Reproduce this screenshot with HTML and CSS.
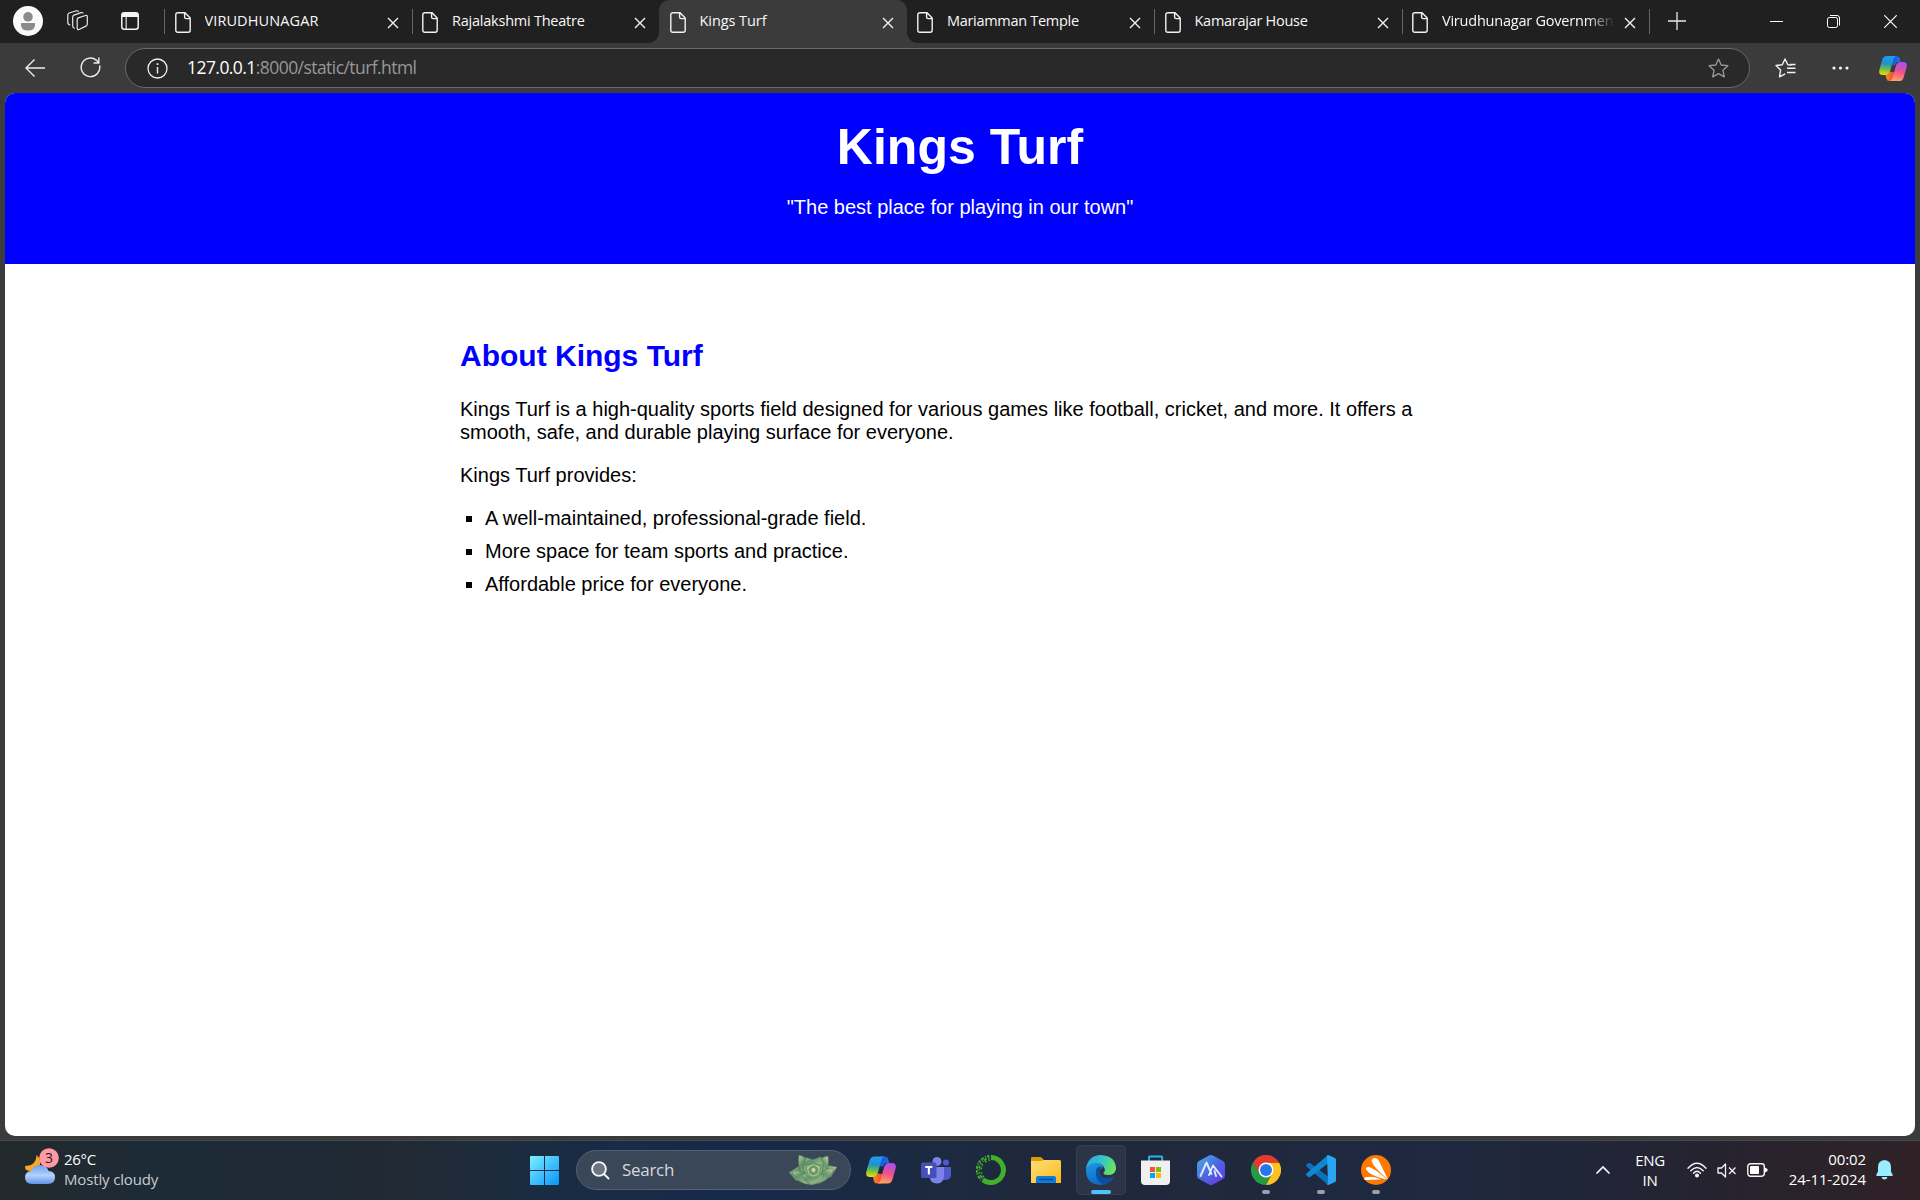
FILE: index.html
```html
<!DOCTYPE html>
<html lang="en">
<head>
<meta charset="utf-8">
<title>Kings Turf</title>
<link rel="stylesheet" href="styles.css">
</head>
<body>
<svg class="defs" width="0" height="0" aria-hidden="true">
  <defs>
    <linearGradient id="cpA" x1="0.5" y1="0" x2="0.4" y2="1"><stop offset="0" stop-color="#1aa0f0"/><stop offset=".4" stop-color="#2390c9"/><stop offset=".7" stop-color="#6cc04a"/><stop offset="1" stop-color="#f7d808"/></linearGradient>
    <linearGradient id="cpB" x1="0.6" y1="0" x2="0.4" y2="1"><stop offset="0" stop-color="#a94ff2"/><stop offset=".5" stop-color="#f0508c"/><stop offset="1" stop-color="#ffa35c"/></linearGradient>
    <linearGradient id="cpC" x1="0" y1="0" x2="1" y2="0.5"><stop offset="0" stop-color="#1b4fd8"/><stop offset="1" stop-color="#1e70e8"/></linearGradient>
    <linearGradient id="cpD" x1="0" y1="0" x2="1" y2="0"><stop offset="0" stop-color="#ff8a2a"/><stop offset="1" stop-color="#e8452c"/></linearGradient>
    <linearGradient id="win" x1="0" y1="0" x2="1" y2="1"><stop offset="0" stop-color="#7df0ff"/><stop offset="1" stop-color="#0894fb"/></linearGradient>
    <linearGradient id="cloud" x1="0" y1="0" x2="0" y2="1"><stop offset="0" stop-color="#6f9ff0"/><stop offset=".55" stop-color="#b3d1fb"/><stop offset="1" stop-color="#6292ea"/></linearGradient>
    <linearGradient id="fold" x1="0" y1="0" x2="1" y2="1"><stop offset="0" stop-color="#ffe07a"/><stop offset="1" stop-color="#fbb81b"/></linearGradient>
    <linearGradient id="edgeTop" x1="0" y1="0.3" x2="1" y2="0.6"><stop offset="0" stop-color="#2aa7e8"/><stop offset=".5" stop-color="#35c6c8"/><stop offset="1" stop-color="#6fe556"/></linearGradient>
    <linearGradient id="edgeLeft" x1="0" y1="0" x2="0.6" y2="1"><stop offset="0" stop-color="#1c9be6"/><stop offset="1" stop-color="#0f62c0"/></linearGradient>
    <linearGradient id="hex" x1="0" y1="0" x2="1" y2="1"><stop offset="0" stop-color="#4fb0e8"/><stop offset=".5" stop-color="#4a68e0"/><stop offset="1" stop-color="#6a30e8"/></linearGradient>
    <linearGradient id="leaf" x1="0" y1="0" x2="1" y2="1"><stop offset="0" stop-color="#cdd69a"/><stop offset=".35" stop-color="#5f9470"/><stop offset="1" stop-color="#b9cc90"/></linearGradient>
    <linearGradient id="leaf2" x1="1" y1="0" x2="0" y2="1"><stop offset="0" stop-color="#d4dba0"/><stop offset=".35" stop-color="#669a72"/><stop offset="1" stop-color="#bccf92"/></linearGradient>
    <symbol id="page" viewBox="0 0 16 21"><path d="M3 .8H10L15.2 6V18.2Q15.2 20.2 13.2 20.2H2.8Q.8 20.2 .8 18.2V2.8Q.8 .8 3 .8M9.6 1V5Q9.6 6.6 11.2 6.6H15" fill="none" stroke="#f2f2f2" stroke-width="1.4"/></symbol>
    <symbol id="x" viewBox="0 0 12 12"><path d="M1 1L11 11M11 1L1 11" stroke="#f2f2f2" stroke-width="1.4" fill="none"/></symbol>
    <symbol id="copilot" viewBox="0 0 30 28">
      <path d="M14 .5H19Q21.500 .5 22.200 3L23.200 7H20.500Q18.300 7 17.400 9.500L17 10.500L13 10Z" fill="url(#cpC)"/>
      <path d="M16 27.500H11Q8.500 27.500 8 25L7 21Q10.500 20.500 11.800 17.500L17 18Z" fill="url(#cpD)"/>
      <path d="M8.500 .5H18Q16.300 1.200 15.500 4L11.800 17Q10.600 21 6.800 21H4Q-.8 21 .4 15.500L3.400 5Q4.600 .5 8.500 .5Z" fill="url(#cpA)"/>
      <path d="M21.500 27.500H12Q13.700 26.800 14.500 24L18.200 11Q19.400 7 23.200 7H26Q30.800 7 29.600 12.500L26.600 23Q25.400 27.500 21.500 27.500Z" fill="url(#cpB)"/>
    </symbol>
  </defs>
</svg>

<div class="tabstrip">
  <div class="strip-tools">
    <svg width="30" height="30" viewBox="0 0 30 30"><circle cx="15" cy="15" r="15" fill="#fafafa"/><circle cx="15" cy="10.800" r="4.800" fill="#8b8b8b"/><path d="M8 17H22V19Q22 24.500 15 24.500T8 19Z" fill="#8b8b8b"/></svg>
    <svg class="spaces" width="21" height="21" viewBox="0 0 21 21" fill="none" stroke="#e8e8e8" stroke-width="1.200" stroke-linejoin="round"><path d="M10.200 9.500Q10.200 8.300 11.300 7.900L18.500 5.500Q20.300 5 20.300 6.800V14Q20.300 15.500 18.900 16.100L12 19.500Q10.200 20.200 10.200 18.300Z"/><path d="M7.800 18.300Q5.700 18 5.700 16V7Q5.700 5.600 7 5.100L14 2.600Q15.600 2.200 16.200 3.600"/><path d="M3.300 15Q.8 14.600 .8 12.500V4.800Q.8 3.500 2.200 3L9.500 .8Q11 .5 11.600 1.700"/></svg>
    <svg class="vtabs" width="18" height="18" viewBox="0 0 18 18"><rect x=".8" y=".8" width="16.400" height="16.400" rx="2.500" fill="none" stroke="#f4f4f4" stroke-width="1.500"/><path d="M1 3Q1 1 3 1H15Q17 1 17 3V5H1ZM4.600 5H5.700V17H4.600Z" fill="#f4f4f4"/></svg>
  </div>
  <div class="tab"><svg class="page"><use href="#page"/></svg><span class="title t1">VIRUDHUNAGAR</span><svg class="x"><use href="#x"/></svg></div>
  <div class="tab"><svg class="page"><use href="#page"/></svg><span class="title t2">Rajalakshmi Theatre</span><svg class="x"><use href="#x"/></svg></div>
  <div class="tab active"><svg class="page"><use href="#page"/></svg><span class="title t3">Kings Turf</span><svg class="x"><use href="#x"/></svg></div>
  <div class="tab plain"><svg class="page"><use href="#page"/></svg><span class="title t4">Mariamman Temple</span><svg class="x"><use href="#x"/></svg></div>
  <div class="tab"><svg class="page"><use href="#page"/></svg><span class="title t5">Kamarajar House</span><svg class="x"><use href="#x"/></svg></div>
  <div class="tab last"><svg class="page"><use href="#page"/></svg><span class="title t6">Virudhunagar Government</span><svg class="x"><use href="#x"/></svg></div>
  <svg class="plus" width="18" height="18" viewBox="0 0 18 18"><path d="M9 0V18M0 9H18" stroke="#e8e8e8" stroke-width="1.300"/></svg>
  <div class="window-buttons">
    <svg width="13" height="13" viewBox="0 0 13 13"><path d="M0 6.500H13" stroke="#fff"/></svg>
    <svg width="13" height="13" viewBox="0 0 13 13" fill="none" stroke="#fff"><rect x=".5" y="2.500" width="10" height="10" rx="1.800"/><path d="M3 .5H10Q12.500 .5 12.500 3V10.500"/></svg>
    <svg width="13" height="13" viewBox="0 0 13 13"><path d="M.3 .3L12.700 12.700M12.700 .3L.3 12.700" stroke="#fff" stroke-width="1.200"/></svg>
  </div>
</div>

<div class="toolbar">
  <svg class="back" width="20" height="18" viewBox="0 0 20 18" fill="none" stroke="#ededed" stroke-width="1.400"><path d="M9.500 .6L1 9L9.500 17.400M1 9H20"/></svg>
  <svg class="reload" width="21" height="21" viewBox="0 0 21 21" fill="none" stroke="#ededed" stroke-width="1.400"><path d="M19.600 8.500A9.300 9.300 0 1 1 16.300 3.100L18.500 5.600M18.800 .5V6H13.500"/></svg>
  <div class="address">
    <svg width="21" height="21" viewBox="0 0 21 21"><circle cx="10.500" cy="10.500" r="9.500" fill="none" stroke="#f0f0f0" stroke-width="1.300"/><path d="M9.800 9H11.200V15.500H9.800ZM9.600 5.300H11.400V7.100H9.600Z" fill="#f0f0f0"/></svg>
    <span class="url"><b>127.0.0.1</b>:8000/static/turf.html</span>
    <svg class="star" width="21" height="20" viewBox="0 0 21 20"><path d="M10.500 1L13.200 7L19.900 7.700L14.900 12.200L16.300 18.900L10.500 15.600L4.700 18.900L6.100 12.200L1.100 7.700L7.800 7Z" fill="none" stroke="#9a9a9a" stroke-width="1.300" stroke-linejoin="round"/></svg>
  </div>
  <svg class="favs" width="21" height="20" viewBox="0 0 21 20" fill="none" stroke="#f2f2f2" stroke-width="1.400" stroke-linejoin="round"><path d="M16.500 7L12.800 6.700L10 1L7.300 6.700L1 7.500L5.600 12L4.500 18.800L10.200 15.800M12 10.200H20.500M12 14.500H20.500M15 6.500H20.500"/></svg>
  <svg class="dots" width="17" height="4" viewBox="0 0 17 4" fill="#f4f4f4"><circle cx="2" cy="2" r="1.600"/><circle cx="8.500" cy="2" r="1.600"/><circle cx="15" cy="2" r="1.600"/></svg>
  <svg class="copilot" width="28" height="27"><use href="#copilot"/></svg>
</div>

<div class="viewport">
  <header class="hero">
    <h1>Kings Turf</h1>
    <p>"The best place for playing in our town"</p>
  </header>
  <main class="content">
    <h2>About Kings Turf</h2>
    <p>Kings Turf is a high-quality sports field designed for various games like football, cricket, and more. It offers a<br>smooth, safe, and durable playing surface for everyone.</p>
    <p>Kings Turf provides:</p>
    <ul>
      <li>A well-maintained, professional-grade field.</li>
      <li>More space for team sports and practice.</li>
      <li>Affordable price for everyone.</li>
    </ul>
  </main>
</div>

<div class="taskbar">
  <div class="weather">
    <svg width="34" height="38" viewBox="0 0 34 38"><path d="M11.500 7Q17 12 14.500 18Q9 26 .5 21.500L0 18Q11 18 11.500 7Z" fill="#f7a823"/><path d="M7 36Q0 35.500 0 29.500T6 23Q8 17 15 17T23.500 23Q30 23 30 29.500T23 36Z" fill="url(#cloud)"/><circle cx="24" cy="10" r="9.800" fill="#ff99a4"/><text x="24" y="15.200" text-anchor="middle" font-size="14" fill="#2a1a1c">3</text></svg>
    <div class="weather-text"><span>26°C</span><span class="dim">Mostly cloudy</span></div>
  </div>
  <svg class="start" width="29" height="29" viewBox="0 0 29 29" fill="url(#win)"><path d="M1 0H14V14H0V1Q0 0 1 0ZM15 0H28Q29 0 29 1V14H15ZM0 15H14V29H1Q0 29 0 28ZM15 15H29V28Q29 29 28 29H15Z"/></svg>
  <div class="search">
    <svg width="19" height="19" viewBox="0 0 19 19" fill="#6b7684" stroke="#f4f4f4" stroke-width="1.900" stroke-linecap="round"><circle cx="8" cy="8" r="6.900"/><path d="M13 13L17.500 17.500"/></svg>
    <span>Search</span>
    <svg class="succulent" width="48" height="30" viewBox="0 0 48 30" stroke="#41704f" stroke-width=".5"><path d="M0 17.500L10 11L20 27L7 25.500Z" fill="url(#leaf)"/><path d="M48 12L37 10L28 26L42 22Z" fill="url(#leaf2)"/><path d="M10 0Q19 2 24 12L13 19Q8 11 10 0Z" fill="url(#leaf)"/><path d="M39 1Q30 2 24 12L36 18Q41 11 39 1Z" fill="url(#leaf2)"/><path d="M17 2.500L24 4.500L32 1.500L35 13H14Z" fill="url(#leaf)"/><path d="M3 17Q16 11 23 29.500Q9 30 3 17Z" fill="url(#leaf)"/><path d="M45 14Q32 11 23 29.500Q40 28 45 14Z" fill="url(#leaf2)"/><path d="M13 20Q24 14 35 20Q32 28 22 30Q15 27 13 20Z" fill="url(#leaf)"/><path d="M14 10Q20 11 24 7Q29 11 34 10Q35 21 24.500 24Q14 21 14 10Z" fill="#7fab77"/><path d="M17.500 12Q25 6 31.500 12Q31.500 20.500 24.500 22Q17.500 20.500 17.500 12Z" fill="#b3cc8e"/><path d="M20 13.500Q25 8 29 13.500Q29.500 19 24.500 20Q19.500 19 20 13.500Z" fill="#6b9f73"/><circle cx="24.500" cy="15" r="2.500" fill="#c3d79b"/></svg>
  </div>
  <div class="apps">
    <div class="app"><svg width="30" height="28"><use href="#copilot"/></svg></div>
    <div class="app"><svg width="30" height="28" viewBox="0 0 30 28"><circle cx="25" cy="6.500" r="3" fill="#5059c9"/><path d="M22 11H30V19Q30 24 24 24H21Z" fill="#5059c9"/><circle cx="16" cy="5.500" r="4.500" fill="#7b83eb"/><path d="M9 11H23V19Q23 27.500 16 27.500T9 21Z" fill="#7b83eb"/><rect y="6.500" width="15.500" height="15.500" rx="1.500" fill="#4650b8"/><path d="M4.300 10H11.300V12H8.900V18.500H6.800V12H4.300Z" fill="#fff"/></svg></div>
    <div class="app"><svg width="30" height="30" viewBox="0 0 30 30" fill="none" stroke="#43b02a"><path d="M15 2.500A12.500 12.500 0 1 1 7 24.700" stroke-width="5"/><path d="M13.500 1A14 14 0 0 0 5 25" stroke-width="1.900" stroke-dasharray="2.500 1 1.200 1.500 3 1.200"/><path d="M13.500 3.200A12 12 0 0 0 7 24" stroke-width="1.900" stroke-dasharray="1.500 1.500 3 .8 1 1.700"/><path d="M14 5.200A10 10 0 0 0 9 23" stroke-width="1.500" stroke-dasharray="1.300 2 2 3"/></svg></div>
    <div class="app"><svg width="30" height="28" viewBox="0 0 30 28"><path d="M0 7V2Q0 1 1.500 1H9Q10 1 11 2L13 4V7Z" fill="#e09a00"/><path d="M0 5H9.500Q11 5 13 4H28.500Q30 4 30 5.500V27H0Z" fill="url(#fold)"/><path d="M5 27V22Q5 20 7 20H23Q25 20 25 22V27Z" fill="#0b7fd8"/><path d="M8.500 23.500H21.500" stroke="#064b97" stroke-width="1.300" stroke-linecap="round"/></svg></div>
    <div class="app current"><svg width="30" height="30" viewBox="0 0 30 30"><path d="M0 15Q0 8 6 8Q17 7 17 13Q11 14 14 20Q18 26 28 22Q23 30 14 30Q0 29 0 15Z" fill="url(#edgeLeft)"/><path d="M10 17Q9 25 17 29Q24 29 28 22.500Q27.500 21.500 25 22.800Q15 25 13.500 17Q13 14 16 12Q10 11 10 17Z" fill="#0b4f9e"/><path d="M0 14Q2 0 15 0Q30 1 30 14Q29 20 22 20Q17 20 17.500 17.500Q19.500 16 18.500 13Q16 8 10 8Q3 8 0 14Z" fill="url(#edgeTop)"/></svg><i></i></div>
    <div class="app"><svg class="store" width="29" height="30" viewBox="0 0 29 30"><path d="M8 6V2Q8 1.500 9 1.500H20.500Q21.200 1.500 21.200 2.500V6" fill="none" stroke="#29b5e8" stroke-width="1.900"/><path d="M0 5.500H29V26Q29 30 25 30H4Q0 30 0 26Z" fill="#f0f0f0"/><path d="M9 12H14V17H9Z" fill="#f35325"/><path d="M15 12H20V17H15Z" fill="#81bc06"/><path d="M9 18H14V23H9Z" fill="#05a6f0"/><path d="M15 18H20V23H15Z" fill="#ffba08"/></svg></div>
    <div class="app"><svg width="28" height="30" viewBox="0 0 28 30"><path d="M12 .6Q14 -.4 16 .6L26 6Q28 7 28 9.500V20.500Q28 23 26 24L16 29.400Q14 30.400 12 29.400L2 24Q0 23 0 20.500V9.500Q0 7 2 6Z" fill="url(#hex)"/><path d="M3.500 21L9.500 7.500L14.500 19M12 20L16 10.500L24.500 21.500M17.500 16L19 21" fill="none" stroke="#e4ebff" stroke-width="1.900" stroke-linecap="round" stroke-linejoin="round"/></svg></div>
    <div class="app running"><svg width="30" height="30" viewBox="0 0 30 30"><path d="M2 7.500A15 15 0 0 0 15 30L21 18.500L15 15L8.800 18.500Z" fill="#269a42"/><path d="M28 7.500A15 15 0 0 1 15 30L21.200 18.500L15 7.500Z" fill="#fcc31e"/><path d="M15 7.500H28A15 15 0 0 0 2 7.500L8.500 18.500Z" fill="#e33b2e"/><circle cx="15" cy="15" r="7.500" fill="#fff"/><circle cx="15" cy="15" r="6" fill="#2576ea"/></svg><i></i></div>
    <div class="app running"><svg width="30" height="30" viewBox="0 0 30 30"><path d="M0 10L2.500 8Q3.500 7.500 4.500 8.300L22 21.500V30L1 12Q0 11 0 10Z" fill="#0b72b8"/><path d="M0 20L2.500 22Q3.500 22.500 4.500 21.700L22 8.500V0L1 18Q0 19 0 20Z" fill="#0f87d2"/><path d="M21 .5Q22 0 23 .3L29 3Q30 3.500 30 4.500V25.500Q30 26.500 29 27L23 29.700Q22 30 21 29.500L22 28Z" fill="#2aa5f3"/></svg><i></i></div>
    <div class="app running"><svg width="30" height="30" viewBox="0 0 30 30"><circle cx="15" cy="15" r="15" fill="#ff7800"/><path d="M10.500 6Q11 3 14 3Q16.500 3 18 6L27 24.500Q13 13 10.500 6ZM5 14.500Q4.500 11.500 8 12Q13 13 26 24.500Q9 21 5 14.500ZM3 24Q3.500 21.500 7 22Q14 21 20 24.500L5 25Q3.500 25 3 24Z" fill="#fff"/></svg><i></i></div>
  </div>
  <div class="tray">
    <svg class="chev" width="14" height="8" viewBox="0 0 14 8"><path d="M1 7L7 1L13 7" fill="none" stroke="#fff" stroke-width="1.700" stroke-linecap="round"/></svg>
    <div class="lang"><span>ENG</span><span>IN</span></div>
    <svg class="wifi" width="20" height="16" viewBox="0 0 20 16" fill="none" stroke="#f4f4f4" stroke-width="1.400" stroke-linecap="round"><path d="M1 6.200Q10 -3.800 19 6.200M3.800 8.800Q10 2.200 16.200 8.800M6.500 11.200Q10 7.400 13.500 11.200"/><circle cx="10" cy="13.500" r="1.300" fill="#fff"/></svg>
    <svg class="sound" width="20" height="15" viewBox="0 0 20 15" fill="none" stroke="#f4f4f4" stroke-width="1.300" stroke-linejoin="round"><path d="M1 5H4.500L8.500 1V14L4.500 10H1ZM12 4.500L18.500 11M18.500 4.500L12 11"/></svg>
    <svg class="battery" width="21" height="14" viewBox="0 0 21 14"><rect x=".8" y=".8" width="16.500" height="12.400" rx="2.600" fill="none" stroke="#f4f4f4" stroke-width="1.400"/><rect x="3" y="3" width="9" height="8" rx=".8" fill="#fff"/><path d="M18 4.500L20.500 6V8L18 9.500Z" fill="#fff"/></svg>
    <div class="clock"><span>00:02</span><span class="date">24-11-2024</span></div>
    <svg class="bell" width="17" height="20" viewBox="0 0 17 20" fill="#99ebff"><path d="M8.500 0Q15 .5 15 7V11.500L16.800 15Q17 16 16 16H1Q0 16 .2 15L2 11.500V7Q2 .5 8.500 0ZM5.500 17H11.500Q11 19.500 8.500 19.500T5.500 17Z"/></svg>
  </div>
</div>
</body>
</html>
```
FILE: styles.css
```css
* { box-sizing: border-box; }
body {
  margin: 0;
  width: 1920px;
  height: 1200px;
  overflow: hidden;
  display: flex;
  flex-direction: column;
  background: #3b3b3b;
  font-family: "Open Sans", sans-serif;
}
svg { display: block; flex: none; }
.defs { position: absolute; }

/* Tab strip */
.tabstrip { height: 43px; flex: none; display: flex; background: #202020; }
.strip-tools { width: 164px; flex: none; display: flex; align-items: center; padding: 0 0 2px 13px; }
.spaces { margin-left: 24px; }
.vtabs { margin-left: 33px; }
.tab {
  width: 247.5px;
  height: 43px;
  flex: none;
  display: flex;
  align-items: center;
  padding: 2px 12px 0 10.5px;
  background: linear-gradient(#666, #666) 0 9px / 1px 25px no-repeat;
}
.page { width: 16px; height: 21px; }
.x { width: 12px; height: 12px; }
.title {
  width: 173px;
  margin: -4px 9px 0 14px;
  flex: none;
  overflow: hidden;
  white-space: nowrap;
  font-size: 14.5px;
  line-height: 22px;
  color: #f8f8f8;
}
.tab.plain { background: none; }
.tab.active {
  position: relative;
  background: #3b3b3b;
  border-radius: 10px 10px 0 0;
}
.tab.active::before, .tab.active::after {
  content: "";
  position: absolute;
  bottom: 0;
  width: 10px;
  height: 10px;
}
.tab.active::before { left: -10px; background: radial-gradient(circle at 0 0, transparent 9.5px, #3b3b3b 10px); }
.tab.active::after { right: -10px; background: radial-gradient(circle at 100% 0, transparent 9.5px, #3b3b3b 10px); }
.tab.last {
  width: 248.5px;
  background: linear-gradient(#666, #666) 0 9px / 1px 25px no-repeat, linear-gradient(#666, #666) 100% 9px / 1px 25px no-repeat;
}
.t1 { letter-spacing: .1px; }
.t2 { letter-spacing: -.23px; }
.t3 { letter-spacing: -.07px; }
.t4 { letter-spacing: -.3px; }
.t5 { letter-spacing: -.27px; }
.t6 { letter-spacing: -.22px; -webkit-mask-image: linear-gradient(90deg, #000 145px, transparent 173px); mask-image: linear-gradient(90deg, #000 145px, transparent 173px); }
.plus { margin: 12px 0 0 18px; }
.window-buttons { display: flex; gap: 44px; margin: 15px 0 0 84px; }

/* Toolbar */
.toolbar { height: 50px; flex: none; display: flex; align-items: center; }
.back { margin: -1px 0 0 25px; }
.reload { margin: -1px 0 0 35px; }
.address {
  width: 1625px;
  height: 40px;
  margin-left: 24px;
  padding: 0 20px 0 21px;
  flex: none;
  display: flex;
  align-items: center;
  border: 1px solid #696969;
  border-radius: 20px;
  background: #292929;
}
.url { margin: -3px auto 0 19px; font-size: 17.5px; letter-spacing: -.56px; color: #989898; white-space: nowrap; }
.url b { font-weight: 400; color: #fff; }
.favs { margin-left: 24.5px; }
.dots { margin: -1px 0 0 36px; }
.copilot { margin-left: 30px; }

/* Page */
.viewport {
  height: 1043px;
  margin: 0 5px;
  flex: none;
  overflow: hidden;
  border-radius: 10px;
  background: #fff;
  font: 20px/23px "Liberation Sans", Arial, sans-serif;
  color: #000;
}
.hero { height: 171px; padding-top: 26px; background: #00f; color: #fff; text-align: center; }
.hero h1 { margin: 0; font-size: 50px; line-height: 57px; }
.hero p { margin: 20px 0 0; }
.content { width: 1000px; margin: 75px auto 0; }
.content h2 { margin: 0 0 25px; font-size: 30px; line-height: 34px; color: #00f; }
.content p { margin: 0 0 20px; white-space: nowrap; }
.content ul { margin: 0; padding-left: 25px; list-style: square; }
.content li { margin-bottom: 10px; }

/* Taskbar */
.taskbar {
  height: 60px;
  margin-top: auto;
  padding-bottom: 1px;
  flex: none;
  display: flex;
  align-items: center;
  background: linear-gradient(90deg, #23292b 0, #1c2b37 150px, #1e2935 320px, #222a33 400px, #1a2c42 540px, #17294a 750px, #1b2a41 880px, #20283b 1100px, #1e2940 1400px, #20263a 1560px, #252330 1700px, #2d2228 1870px, #302127 1920px);
  border-top: 1px solid #41484f;
  color: #fff;
  font-size: 15px;
  line-height: 20px;
}
.weather { width: 505px; margin: -1px 0 0 25px; flex: none; display: flex; align-items: center; }
.weather svg { margin-top: -6px; }
.weather-text { margin: -2px 0 0 5px; display: flex; flex-direction: column; letter-spacing: -.3px; }
.dim { color: #c8cccf; letter-spacing: -.15px; }
.search {
  width: 275px;
  height: 40px;
  margin-left: 17px;
  padding: 0 13px 0 14px;
  flex: none;
  display: flex;
  align-items: center;
  border: 1px solid #526073;
  border-radius: 20px;
  background: #394759;
  color: #d5d9de;
  font-size: 17px;
}
.search span { margin: 0 auto 0 12px; letter-spacing: -.3px; }
.apps { display: flex; gap: 5px; margin-left: 5px; }
.app { position: relative; width: 50px; height: 50px; flex: none; display: grid; place-items: center; border-radius: 5px; }
.app.current { background: #2c3547; box-shadow: inset 0 0 0 1px #353d4e; }
.app i { position: absolute; left: 21px; bottom: 1px; width: 8px; height: 4px; border-radius: 2px; background: #9a9faa; }
.app.current i { left: 15px; width: 20px; background: #4cc2ff; }
.store { margin-right: 1px; }
.tray { display: flex; align-items: center; margin-left: 195px; letter-spacing: -.3px; }
.lang { width: 30px; margin: -1px 0 0 25px; display: flex; flex-direction: column; align-items: center; }
.wifi { margin-left: 22px; }
.sound { margin-left: 10px; }
.battery { margin-left: 10px; }
.clock { width: 98px; margin-top: -2px; display: flex; flex-direction: column; align-items: flex-end; white-space: nowrap; letter-spacing: -.1px; }
.bell { margin-left: 10px; }
```
